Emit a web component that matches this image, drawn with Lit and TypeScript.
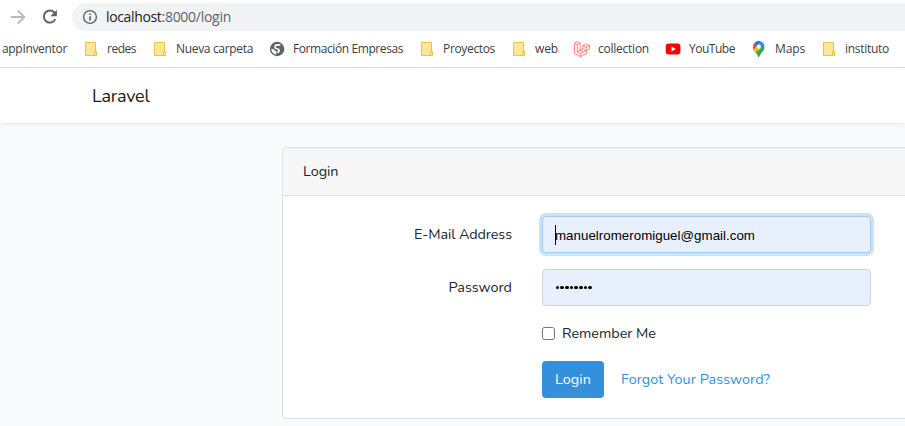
import { LitElement, html, css, svg } from "lit";
import { customElement, property } from "lit/decorators.js";

/** A single line of text spread evenly over a given width. */
@customElement("fit-text")
class FitText extends LitElement {
  @property({ type: Number }) width = 0;
  @property() text = "";
  static styles = css`
    :host { display: block; flex: none; white-space: pre; }
    .run { display: inline-block; }
  `;
  updated() {
    const run = this.renderRoot.querySelector(".run") as HTMLElement;
    run.style.letterSpacing = "0px";
    const natural = run.getBoundingClientRect().width;
    run.style.letterSpacing = `${(this.width - natural) / this.text.length}px`;
    this.style.width = `${this.width}px`;
  }
  render() {
    return html`<span class="run">${this.text}</span>`;
  }
}

const folder = svg`<path d="M2.500 1.500h10v9h1v4h-11z" fill="#ffe694" stroke="#e9c446"/><path d="M11.500 14.500v-4h2v4z" fill="#ffe694" stroke="#e9c446"/>`;
const globe = svg`<circle cx="8.100" cy="8" r="7.200" fill="#5f6368"/><path d="M11.300 3.900H8.200Q6 4.100 6 6q0 1.500 1.800 1.700 2.300.2 2.300 1.700 0 1.800-2.500 1.900" fill="none" stroke="#fff" stroke-width="1.600"/><path d="M2.400 7.500l3.300 1.600 1.500 1.800v2.700C4.200 13 2.200 10.500 2.400 7.500z" fill="#fff"/>`;
const laravel = svg`<g fill="none" stroke="#ff6f66" stroke-width=".85" stroke-linejoin="round"><path d="M.5 2.200l2.800-1.600 2.800 1.600v7.100l2.800-1.600V4.600l2.800-1.600 3.900 1.600v3.200l-3 1.700v2.900l-6.200 3.300-5.900-3.300z"/><path d="M.5 2.200l2.800 1.600 2.800-1.600M3.300 3.800v7.100l3.100 1.800 6.200-3.400M6.100 9.300l-2.800 1.600M6.400 12.700v3M8.900 4.600l3.100 1.700 3.600-1.700M12 6.300v3.200M8.900 7.700l3.100 1.800M6.100 9.300l3 1.800"/></g>`;
const youtube = svg`<rect x=".7" y="2.600" width="14.700" height="11" rx="3" fill="#f00"/><path d="M6.500 5.600l4.300 2.500-4.300 2.500z" fill="#fff"/>`;
const maps = svg`<path d="M2.900 9.100C3.700 11.100 5.700 12 6.700 14.800c.3.900.5 1.200 1 1.200s.8-.4 1-1.200c.9-2.800 4.800-4.600 4.800-9.100 0-1-.2-1.900-.6-2.700z" fill="#34a853"/><path d="M2.900 9.100L6 5.500l3.800 1.900-5.400 4.200c-.7-.8-1.200-1.600-1.500-2.500z" fill="#fbbc04"/><path d="M3.400 2.100l3 2.600-4 4.200C1.800 6.500 1.800 4 3.400 2.100z" fill="#ea4335"/><path d="M3.400 2.100C4.900.3 7.400-.5 9.600.3L6.300 4.700z" fill="#1a73e8"/><path d="M9.500.3c1.600.5 2.900 1.600 3.500 3L9.700 7.200 6.300 4.600z" fill="#4285f4"/><circle cx="7.800" cy="5.700" r="2.100" fill="#fff"/>`;

const bookmarks = [
  { label: "appInventor", width: 65 },
  { label: "redes", width: 29, icon: folder },
  { label: "Nueva carpeta", width: 77, icon: folder },
  { label: "Formación Empresas", width: 110, icon: globe },
  { label: "Proyectos", width: 52, icon: folder },
  { label: "web", width: 23, icon: folder },
  { label: "collection", width: 51, icon: laravel },
  { label: "YouTube", width: 46, icon: youtube },
  { label: "Maps", width: 30, icon: maps },
  { label: "instituto", width: 44, icon: folder },
];

@customElement("browser-bar")
class BrowserBar extends LitElement {
  static styles = css`
    :host { display: block; height: 67px; background: #fff; border-bottom: 1px solid #dadce0; overflow: hidden; }
    .tools { display: flex; align-items: center; height: 28px; padding-top: 3px; }
    svg { display: block; flex: none; }
    .forward { margin-left: 10px; }
    .reload { margin-left: 15px; }
    .address { display: flex; align-items: center; gap: 8px; flex: 1; height: 28px; margin-left: 13px; padding-left: 10px; border-radius: 14px 0 0 14px; background: #f1f3f4; box-sizing: border-box; }
    .url { display: flex; font: 14px/20px "Open Sans", sans-serif; color: #5f6368; }
    .host { color: #202124; }
    .marks { display: flex; gap: 16px; padding: 9px 0 0 2px; }
    .mark { display: flex; gap: 8px; flex: none; align-items: center; height: 18px; font: 12px/18px "Open Sans", sans-serif; color: #3c4043; }
  `;
  render() {
    return html`
      <div class="tools">
        <svg class="forward" width="16" height="16" viewBox="0 0 16 16" fill="none" stroke="#bababc" stroke-width="1.900"><path d="M1 8h13M7.800 1.500L14.300 8l-6.500 6.500"/></svg>
        <svg class="reload" width="18" height="18" viewBox="0 0 18 18"><path d="M14.300 11.100A6 6 0 1 1 13.600 4.900" fill="none" stroke="#5f6368" stroke-width="2"/><path d="M15.900 1.700v6.600H9.300z" fill="#5f6368"/></svg>
        <div class="address">
          <svg width="16" height="16" viewBox="0 0 16 16"><circle cx="8" cy="8" r="6.400" fill="none" stroke="#5f6368" stroke-width="1.400"/><path d="M7.200 7.200h1.700v4.400H7.200zM7.200 4.400h1.700v1.700H7.200z" fill="#5f6368"/></svg>
          <div class="url">
            <fit-text class="host" text="localhost" width="55.500"></fit-text>
            <fit-text text=":8000/login" width="69.500"></fit-text>
          </div>
        </div>
      </div>
      <div class="marks">
        ${bookmarks.map((b) => html`<div class="mark">
          ${b.icon ? html`<svg width="16" height="16" viewBox="0 0 16 16" overflow="visible">${b.icon}</svg>` : ""}
          <fit-text text=${b.label} width=${b.width}></fit-text>
        </div>`)}
      </div>`;
  }
}

@customElement("login-card")
class LoginCard extends LitElement {
  static styles = css`
    :host { display: block; width: 655px; height: 272px; box-sizing: border-box; border: 1px solid #dfdfdf; border-radius: 4px; background: #fff; overflow: hidden; font: 14.4px/23px Nunito, Lato, sans-serif; color: #212529; }
    .header { display: flex; align-items: center; height: 47px; padding-left: 20px; background: #f7f7f7; border-bottom: 1px solid #dfdfdf; }
    .body { display: grid; grid-template-columns: 229px 329px; column-gap: 30px; grid-auto-rows: 37px; row-gap: 16px; padding-top: 20px; }
    .label { display: flex; align-items: center; justify-content: flex-end; }
    .input { display: flex; align-items: center; height: 37px; box-sizing: border-box; padding-left: 12px; border: 1px solid #ced4da; border-radius: 4px; background: #e8f0fe; color: #000; font: 13.333px/18px "Liberation Sans", sans-serif; }
    .email { padding-top: 2px; }
    .focus { border-color: #a1cbef; box-shadow: 0 0 0 3px #cbe3f5; }
    .caret { width: 1px; height: 20px; background: #000; margin-right: -1px; }
    .dots { display: flex; gap: 1px; padding-left: 0.500px; }
    .dot { width: 3.700px; height: 3.700px; border-radius: 50%; background: #000; }
    .remember, .actions { grid-column: 2; display: flex; align-items: center; }
    .remember { gap: 7px; height: 23px; }
    .box { width: 13px; height: 13px; box-sizing: border-box; border: 1px solid #767676; border-radius: 2.500px; background: #fff; }
    .actions { margin-top: -14px; height: 37px; gap: 17px; }
    .button { display: flex; align-items: center; justify-content: center; width: 62px; height: 37px; border-radius: 4px; background: #3490dc; color: #fff; }
    .link { color: #3490dc; }
  `;
  render() {
    return html`
      <div class="header"><fit-text text="Login" width="35.500"></fit-text></div>
      <div class="body">
        <div class="label"><fit-text text="E-Mail Address" width="98"></fit-text></div>
        <div class="input focus"><span class="caret"></span><fit-text class="email" text="manuelromeromiguel@gmail.com" width="200"></fit-text></div>
        <div class="label"><fit-text text="Password" width="63.500"></fit-text></div>
        <div class="input"><div class="dots">${Array.from({ length: 8 }, () => html`<span class="dot"></span>`)}</div></div>
        <div class="remember"><span class="box"></span><fit-text text="Remember Me" width="94"></fit-text></div>
        <div class="actions">
          <div class="button"><fit-text text="Login" width="36"></fit-text></div>
          <fit-text class="link" text="Forgot Your Password?" width="149"></fit-text>
        </div>
      </div>`;
  }
}

@customElement("app-root")
class AppRoot extends LitElement {
  static styles = css`
    :host { display: block; width: 100%; height: 426px; overflow: hidden; background: #f8fafc; }
    .nav { display: flex; align-items: center; height: 55px; padding-left: 92px; background: #fff; box-shadow: 0 2px 4px rgba(0, 0, 0, 0.06); font: 18px/26px Nunito, Lato, sans-serif; color: #1b1b1b; }
    .main { padding: 24px 0 0 282px; }
  `;
  render() {
    return html`
      <browser-bar></browser-bar>
      <div class="nav"><fit-text text="Laravel" width="57.500"></fit-text></div>
      <div class="main"><login-card></login-card></div>`;
  }
}
